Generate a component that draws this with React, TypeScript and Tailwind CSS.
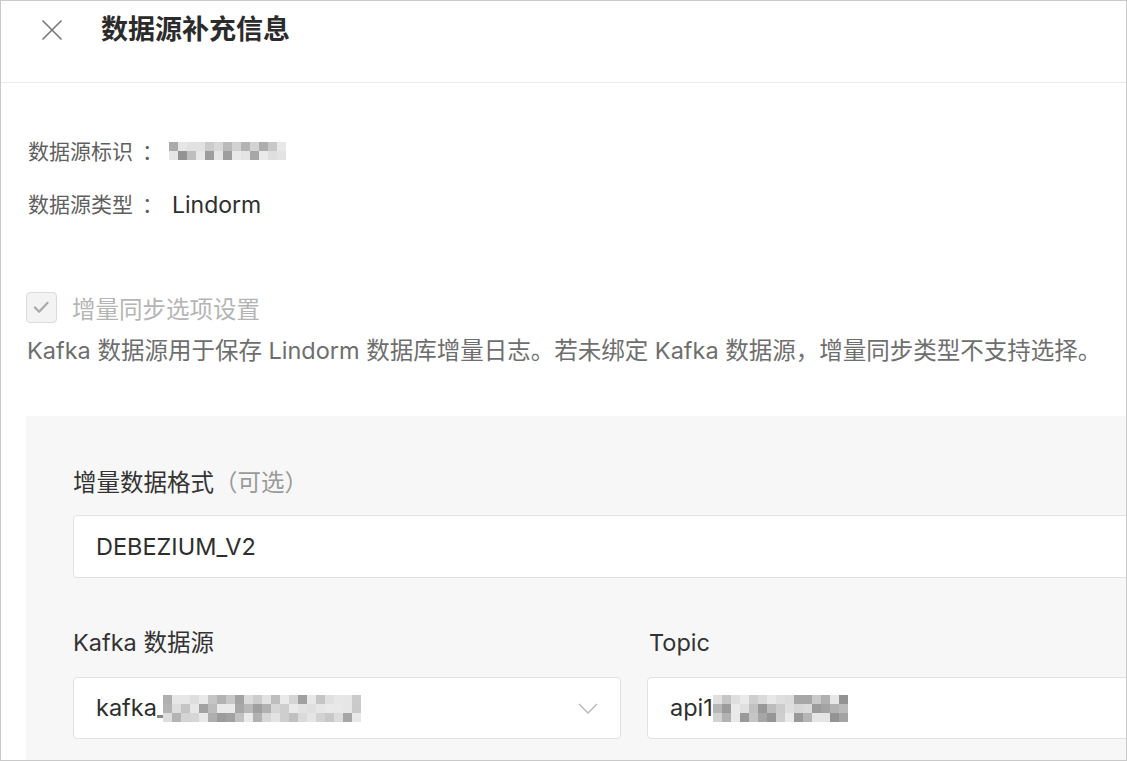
import React from "react";

function shadeFor(seed: number, i: number, dark: number) {
  const x = Math.sin(seed * 97.13 + i * 12.9898) * 43758.5453;
  const f = x - Math.floor(x);
  const v = Math.round(234 - f * f * dark);
  return `rgb(${v},${v},${v})`;
}

function Mosaic({ cols, rows, cell, seed, dark }: { cols: number; rows: number; cell: number; seed: number; dark: number }) {
  const cells = [];
  for (let r = 0; r < rows; r++) {
    for (let c = 0; c < cols; c++) {
      cells.push(
        <div key={`${r}-${c}`} style={{ width: cell, height: cell, backgroundColor: shadeFor(seed, r * cols + c, dark) }} />
      );
    }
  }
  return (
    <div className="grid shrink-0" style={{ gridTemplateColumns: `repeat(${cols}, ${cell}px)` }}>
      {cells}
    </div>
  );
}

export default function App() {
  return (
    <div className="h-[761px] w-[1127px] overflow-hidden border border-[#c9c9c9] bg-white font-['Inter','Noto_Sans_CJK_SC',sans-serif]">
      {/* Header */}
      <div className="h-[82px] border-b border-[#e9e9e9]">
        <div className="flex h-[58px] items-center pl-[41px]">
          <svg width="20" height="20" viewBox="0 0 20 20" className="shrink-0">
            <path d="M1 1 L19 19 M19 1 L1 19" stroke="#7a7a7a" strokeWidth="1.7" strokeLinecap="round" />
          </svg>
          <div className="ml-[39px] text-[27px] font-semibold leading-[36px] text-[#2b2b2b]">数据源补充信息</div>
        </div>
      </div>

      <div className="pl-[25px]">
        {/* info rows */}
        <div className="ml-[2px] mt-[54px] flex h-[30px] items-center leading-[30px]">
          <span className="w-[141px] shrink-0 text-[21px] text-[#5f5f5f]">
            数据源标识<span className="ml-[9px]">：</span>
          </span>
          <div className="mt-[-2px]">
            <Mosaic cols={13} rows={2} cell={9} seed={3} dark={90} />
          </div>
        </div>
        <div className="ml-[2px] mt-[23px] flex h-[30px] items-center leading-[30px]">
          <span className="w-[144px] shrink-0 text-[21px] text-[#5f5f5f]">
            数据源类型<span className="ml-[9px]">：</span>
          </span>
          <span className="text-[23px] text-[#2e2e2e]">Lindorm</span>
        </div>

        {/* checkbox */}
        <div className="mt-[71px] flex h-[32px] items-center gap-[15px]">
          <div className="flex h-[31px] w-[31px] shrink-0 items-center justify-center rounded-[4px] border border-[#dcdcdc] bg-[#f3f3f3]">
            <svg width="31" height="31" viewBox="0 0 31 31">
              <polyline points="8.5,15.5 13,20 22,10.5" fill="none" stroke="#a9a9a9" strokeWidth="2.4" strokeLinecap="round" strokeLinejoin="round" />
            </svg>
          </div>
          <span className="mt-[6px] text-[23.5px] leading-[32px] text-[#b5b5b5]">增量同步选项设置</span>
        </div>

        <div className="ml-[1px] mt-[12px] whitespace-nowrap text-[23.5px] leading-[32px] text-[#6e6e6e]">
          Kafka 数据源用于保存 Lindorm 数据库增量日志。若未绑定 Kafka 数据源，增量同步类型不支持选择。
        </div>

        {/* panel */}
        <div className="mt-[49px] h-[400px] w-[1216px] shrink-0 bg-[#f7f7f7] px-[47px] pt-[51px]">
          <div className="text-[23.5px] leading-[32px] text-[#333]">
            增量数据格式<span className="text-[#9a9a9a]">（可选）</span>
          </div>
          <div className="mt-[16px] flex h-[63px] items-center rounded-[4px] border border-[#e2e2e2] bg-white pl-[22px] text-[23.5px] text-[#2e2e2e]">
            DEBEZIUM_V2
          </div>

          <div className="mt-[49px] grid grid-cols-[548px_548px] gap-x-[26px]">
            <div>
              <div className="text-[23.5px] leading-[32px] text-[#333]">Kafka 数据源</div>
              <div className="mt-[18px] flex h-[62px] items-center rounded-[4px] border border-[#e2e2e2] bg-white pl-[22px] pr-[22px] text-[23.5px] text-[#2e2e2e]">
                <span>kafka</span>
                <span className="mt-[16px] h-[3px] w-[6px] bg-[#888]"></span>
                <Mosaic cols={22} rows={3} cell={9} seed={11} dark={80} />
                <div className="flex-1" />
                <svg width="20" height="11" viewBox="0 0 20 11">
                  <polyline points="1,1 10,10 19,1" fill="none" stroke="#b8b8b8" strokeWidth="1.4" />
                </svg>
              </div>
            </div>
            <div>
              <div className="ml-[2px] text-[23.5px] leading-[32px] text-[#333]">Topic</div>
              <div className="mt-[18px] flex h-[62px] items-center rounded-[4px] border border-[#e2e2e2] bg-white pl-[22px] text-[23.5px] text-[#2e2e2e]">
                <span>api1</span>
                <Mosaic cols={15} rows={3} cell={9} seed={29} dark={90} />
              </div>
            </div>
          </div>
        </div>
      </div>
    </div>
  );
}
